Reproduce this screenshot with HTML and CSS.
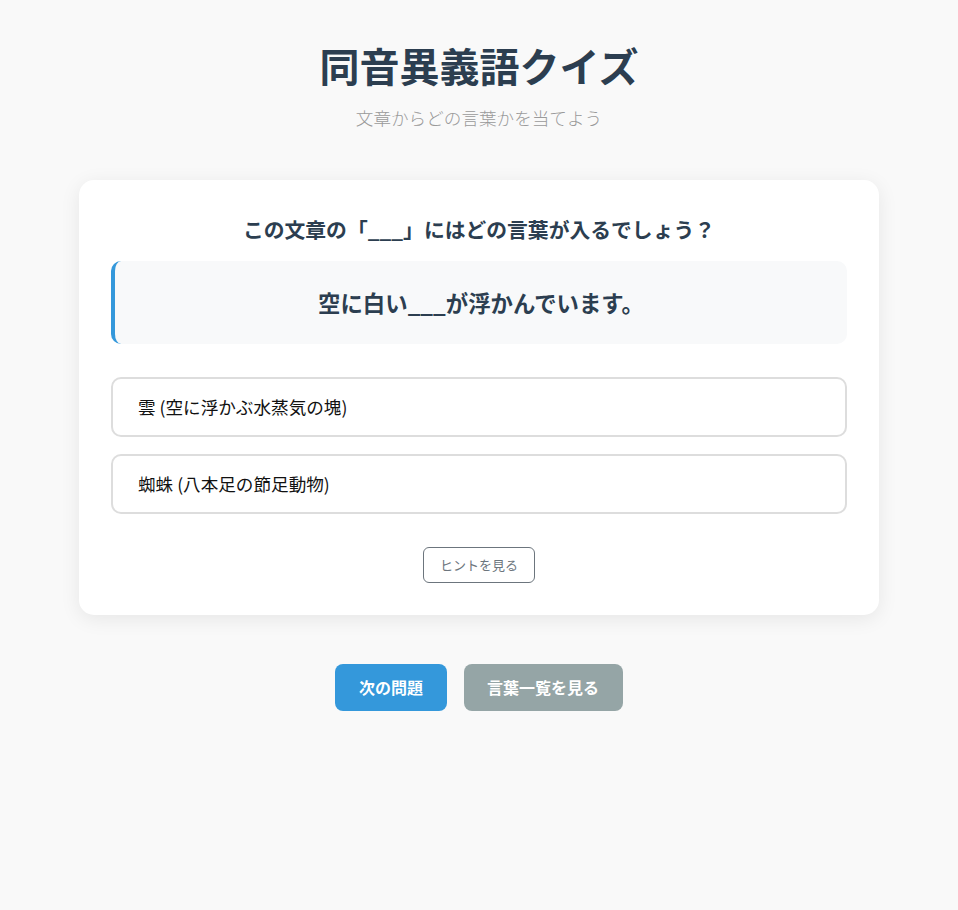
FILE: index.html
```html
<!DOCTYPE html>
<html lang="ja">
<head>
<meta charset="utf-8">
<title>同音異義語クイズ</title>
<link rel="stylesheet" href="styles.css">
</head>
<body>
<div class="page">
  <header class="header">
    <h1 class="title">同音異義語クイズ</h1>
    <p class="subtitle">文章からどの言葉かを当てよう</p>
  </header>
  <main class="card">
    <h2 class="question">この文章の「___」にはどの言葉が入るでしょう？</h2>
    <div class="sentence">空に白い___が浮かんでいます。</div>
    <div class="options">
      <button class="option">雲 (空に浮かぶ水蒸気の塊)</button>
      <button class="option">蜘蛛 (八本足の節足動物)</button>
    </div>
    <div class="hint-row">
      <button class="hint">ヒントを見る</button>
    </div>
  </main>
  <div class="actions">
    <button class="btn btn-primary">次の問題</button>
    <button class="btn btn-secondary">言葉一覧を見る</button>
  </div>
</div>
</body>
</html>
```
FILE: styles.css
```css
* { box-sizing: border-box; }
html, body {
  margin: 0;
  padding: 0;
  background: #f9f9f9;
  font-family: "Noto Sans CJK JP", "Noto Sans", sans-serif;
  color: #333;
}
.page {
  max-width: 840px;
  margin: 0 auto;
  padding: 41px 20px 40px;
}
.header {
  text-align: center;
  margin-bottom: 50px;
}
.title {
  margin: 0 0 17px;
  font-size: 40px;
  line-height: 48px;
  font-weight: 700;
  color: #2c3e50;
}
.subtitle {
  margin: 0;
  font-size: 17.6px;
  line-height: 24px;
  font-weight: 300;
  color: #9a9a9a;
}
.card {
  display: block;
  background: #fff;
  border-radius: 15px;
  padding: 32px;
  box-shadow: 0 4px 20px rgba(0, 0, 0, 0.08);
}
.question {
  margin: 0 0 15px;
  text-align: center;
  font-size: 20.8px;
  line-height: 34px;
  font-weight: 700;
  color: #2c3e50;
}
.sentence {
  background: #f8f9fa;
  border-left: 4px solid #3498db;
  border-radius: 10px;
  padding: 25px;
  text-align: center;
  font-size: 22.4px;
  line-height: 33px;
  font-weight: 700;
  color: #2c3e50;
  margin-bottom: 33px;
}
.options {
  display: flex;
  flex-direction: column;
  gap: 17px;
}
.option {
  display: block;
  width: 100%;
  text-align: left;
  background: #fff;
  border: 2px solid #ddd;
  border-radius: 10px;
  padding: 16px 25px;
  font-family: inherit;
  font-size: 17.6px;
  line-height: 24px;
  color: #111;
}
.hint-row {
  display: flex;
  justify-content: center;
  margin-top: 33px;
}
.hint {
  background: #fff;
  border: 1px solid #6c757d;
  border-radius: 6px;
  padding: 8px 16px;
  font-family: inherit;
  font-size: 13px;
  line-height: 18px;
  color: #6c757d;
}
.actions {
  display: flex;
  justify-content: center;
  gap: 17px;
  margin-top: 49px;
}
.btn {
  border: none;
  border-radius: 8px;
  padding: 12px 23.5px;
  font-family: inherit;
  font-size: 16px;
  line-height: 23px;
  font-weight: 700;
  color: #fff;
}
.btn-primary { background: #3498db; }
.btn-secondary { background: #95a5a6; }
```
